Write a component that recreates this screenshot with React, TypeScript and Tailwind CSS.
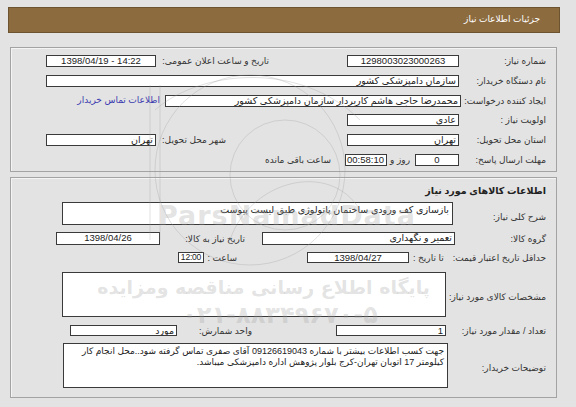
import React from 'react';

const font = "font-['Liberation_Sans','DejaVu_Sans',sans-serif]";

function Box({ w, h = 'h-[12px]', children, align = 'right', ltr = false, className = '' }: { w: string; h?: string; children?: React.ReactNode; align?: 'right' | 'center'; ltr?: boolean; className?: string }) {
  return (
    <div dir={ltr ? 'ltr' : undefined} className={`${w} ${h} shrink-0 bg-white border border-[#3a3a3a] px-[2px] leading-[10px] text-[9.5px] text-[#222] overflow-hidden whitespace-nowrap ${align === 'center' ? 'text-center' : 'text-right'} ${className}`}>
      {children}
    </div>
  );
}

function Label({ w = '', children, className = '' }: { w?: string; children: React.ReactNode; className?: string }) {
  return <div className={`${w} shrink-0 text-right text-[9px] leading-[12px] text-[#333] whitespace-nowrap ${className}`}>{children}</div>;
}

export default function App() {
  return (
    <div dir="rtl" className={`${font} relative w-[576px] h-[407px] bg-[#e3e3e3] overflow-hidden pt-[7px]`}>
      {/* header bar */}
      <div className="mr-[16px] w-[552px] h-[26px] bg-[#8c6b3f] border border-[#6e5330] flex items-center pr-[19px]">
        <span className="text-white text-[9px]">جزئیات اطلاعات نیاز</span>
      </div>

      {/* panel 1 */}
      <div className="mr-[19px] mt-[14px] w-[547px] h-[125px] border border-[#a3a3a3] shadow-[inset_1px_1px_0_#f4f4f4] pt-[7px] pr-[10px] flex flex-col gap-[7.8px]">
        <div className="flex items-center h-[12px]">
          <Label w="w-[87px]">شماره نیاز:</Label>
          <Box w="w-[112px]" align="center">1298003023000263</Box>
          <div className="w-[78px] shrink-0" />
          <Label w="w-[113px]">تاریخ و ساعت اعلان عمومی:</Label>
          <Box w="w-[110px]" align="center" ltr>1398/04/19 - 14:22</Box>
        </div>
        <div className="flex items-center h-[12px]">
          <Label w="w-[87px]">نام دستگاه خریدار:</Label>
          <Box w="w-[413px]">سازمان دامپزشکی کشور</Box>
        </div>
        <div className="flex items-center h-[12px]">
          <Label w="w-[85px]">ایجاد کننده درخواست:</Label>
          <Box w="w-[296px]">محمدرضا حاجی هاشم کاربردار سازمان دامپزشکی کشور</Box>
          <a className="mr-[5px] text-[9px] text-[#3b3bb0]">اطلاعات تماس خریدار</a>
        </div>
        <div className="flex items-center h-[12px]">
          <Label w="w-[87px]">اولویت نیاز :</Label>
          <Box w="w-[112px]">عادی</Box>
        </div>
        <div className="flex items-center h-[12px]">
          <Label w="w-[87px]">استان محل تحویل:</Label>
          <Box w="w-[112px]">تهران</Box>
          <div className="w-[121px] shrink-0" />
          <Label w="w-[70px]">شهر محل تحویل:</Label>
          <Box w="w-[110px]">تهران</Box>
        </div>
        <div className="flex items-center h-[12px]">
          <Label w="w-[87px]">مهلت ارسال پاسخ:</Label>
          <Box w="w-[44px]" align="center">0</Box>
          <Label w="w-[28px]" className="pr-[5px]">روز و</Label>
          <Box w="w-[42px]" align="center">00:58:10</Box>
          <Label className="pr-[14px]">ساعت باقی مانده</Label>
        </div>
      </div>

      {/* panel 2 */}
      <div className="mr-[19px] mt-[5px] w-[547px] h-[221px] border border-[#a3a3a3] shadow-[inset_1px_1px_0_#f4f4f4] pt-[7px] pr-[10px] flex flex-col">
        <div className="text-[9.5px] font-bold text-[#222] leading-[12px] h-[12px]">اطلاعات کالاهای مورد نیاز</div>
        <div className="flex items-start mt-[5px]">
          <Label w="w-[93px]" className="pt-[9px]">شرح کلی نیاز:</Label>
          <Box w="w-[391px]" h="h-[23px]" className="pt-[2px] px-[3px]">بازسازی کف ورودی ساختمان پاتولوژی طبق لیست پیوست</Box>
        </div>
        <div className="flex items-center mt-[7px] h-[13px]">
          <Label w="w-[91px]">گروه کالا:</Label>
          <Box w="w-[193px]" h="h-[13px]">تعمیر و نگهداری</Box>
          <div className="w-[17px] shrink-0" />
          <Label w="w-[85px]">تاریخ نیاز به کالا:</Label>
          <Box w="w-[104px]" h="h-[13px]" align="center">1398/04/26</Box>
        </div>
        <div className="flex items-center mt-[7px] h-[11px]">
          <div className="w-[137px] shrink-0 flex justify-between pl-[4px]">
            <Label>حداقل تاریخ اعتبار قیمت:</Label>
            <Label>تا تاریخ :</Label>
          </div>
          <Box w="w-[102px]" h="h-[11px]" align="center" className="leading-[9px]">1398/04/27</Box>
          <div className="w-[70px] shrink-0" />
          <Label w="w-[33px]">ساعت :</Label>
          <div dir="ltr" className="w-[26px] h-[11px] shrink-0 bg-white border border-[#3a3a3a] flex items-center justify-center text-[8.5px] leading-[9px] text-[#222] whitespace-nowrap tracking-[-0.2px]">12:00</div>
        </div>
        <div className="flex items-center mt-[9px]">
          <Label w="w-[100px]" className="pt-[4px]">مشخصات کالای مورد نیاز:</Label>
          <Box w="w-[384px]" h="h-[45px]" />
        </div>
        <div className="flex items-center mt-[8px] h-[11px]">
          <Label w="w-[100px]">تعداد / مقدار مورد نیاز:</Label>
          <Box w="w-[110px]" h="h-[11px]" className="leading-[9px]">1</Box>
          <div className="w-[84px] shrink-0" />
          <Label w="w-[75px]">واحد شمارش:</Label>
          <Box w="w-[107px]" h="h-[11px]" className="leading-[9px]">مورد</Box>
        </div>
        <div className="flex items-center mt-[7px]">
          <Label w="w-[98px]" className="pt-[4px]">توضیحات خریدار:</Label>
          <div className="w-[385px] h-[45px] shrink-0 bg-white border border-[#3a3a3a] px-[3px] pt-[2px] text-[9px] leading-[11px] text-[#222] text-right">
            جهت کسب اطلاعات بیشتر با شماره 09126619043 آقای صفری تماس گرفته شود..محل انجام کار کیلومتر 17 اتوبان تهران-کرج بلوار پژوهش اداره دامپزشکی میباشد.
          </div>
        </div>
      </div>

      {/* watermark */}
      <div className="absolute inset-0 pointer-events-none">
        <svg className="absolute left-0 top-0" width="576" height="407" viewBox="0 0 576 407" fill="none" stroke="#9a9a9a" strokeOpacity="0.3" strokeWidth="1">
          <circle cx="250" cy="170" r="95" />
          <circle cx="285" cy="175" r="55" />
          <path d="M155 110 C 200 70, 300 60, 360 120" />
          <path d="M230 240 C 250 180, 330 160, 360 210" />
          <line x1="150" y1="85" x2="150" y2="240" />
          <line x1="160" y1="85" x2="160" y2="240" />
        </svg>
        <div dir="ltr" className="absolute left-[158px] top-[196px] text-[27px] font-bold tracking-[1px] text-[#a0a0a0]/30 font-['DejaVu_Sans',sans-serif]">ParsNamadData</div>
        <div className="absolute left-[150px] top-[273px] w-[280px] text-center text-[19px] font-bold text-[#a0a0a0]/30 font-['DejaVu_Sans',sans-serif] whitespace-nowrap">پایگاه اطلاع رسانی مناقصه ومزایده</div>
        <div className="absolute left-[175px] top-[297px] w-[210px] text-center text-[24px] font-bold text-[#a0a0a0]/30 font-['DejaVu_Sans',sans-serif] whitespace-nowrap">۰۲۱-۸۸۳۴۹۶۷۰-۵</div>
      </div>
    </div>
  );
}
